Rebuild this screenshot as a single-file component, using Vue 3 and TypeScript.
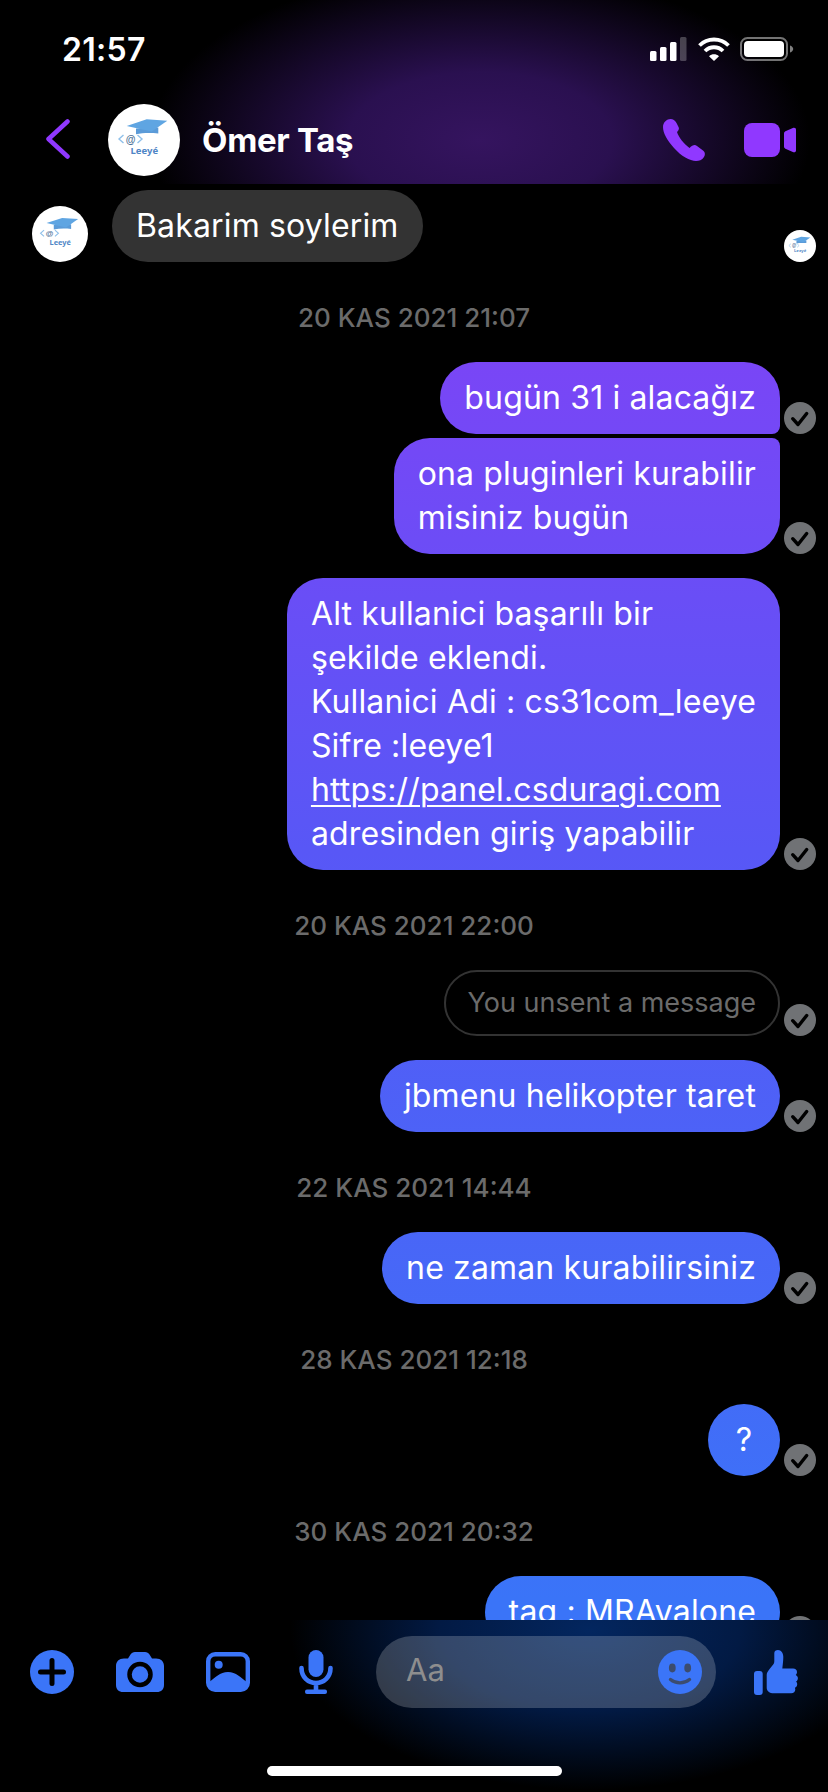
<template>
  <div class="screen">
    <header class="header">
      <div class="status">
        <span class="clock">21:57</span>
        <div class="status-icons">
          <svg width="38" height="24" viewBox="0 0 38 24">
            <rect x="0" y="14" width="6.5" height="10" rx="1.5" fill="#fff" />
            <rect x="10" y="10" width="6.5" height="14" rx="1.5" fill="#fff" />
            <rect x="20" y="5" width="6.5" height="19" rx="1.5" fill="#fff" />
            <rect x="30" y="0" width="6.5" height="24" rx="1.5" fill="#fff" opacity=".25" />
          </svg>
          <svg width="32" height="24" viewBox="0 0 32 24" fill="none" stroke="#fff" stroke-width="3.8">
            <path d="M1.5 8.5C9.5 .5 22.5 .5 30.5 8.5" />
            <path d="M7 14c5 -5 13 -5 18 0" />
            <path d="M11 19.2c3 -2.6 7 -2.6 10 0L16 24z" fill="#fff" stroke="none" />
          </svg>
          <svg width="54" height="24" viewBox="0 0 54 24">
            <rect x="1" y="1" width="46" height="22" rx="6.5" fill="none" stroke="#fff" stroke-opacity=".45" stroke-width="2" />
            <rect x="4" y="4" width="40" height="16" rx="4" fill="#fff" />
            <path d="M50 8.5c2 .6 3.2 2 3.2 3.5s-1.2 2.900 -3.200 3.500z" fill="#fff" opacity=".5" />
          </svg>
        </div>
      </div>
      <nav class="nav">
        <svg class="back" width="24" height="40" viewBox="0 0 24 40" fill="none" stroke="#9038ff" stroke-width="4.500" stroke-linecap="round" stroke-linejoin="round">
          <path d="M21.500 2.500 2.500 20l19 17.500" />
        </svg>
        <svg class="avatar" width="72" height="72" viewBox="0 0 72 72">
          <!-- logo, reused below with <use> -->
          <g id="leeye">
            <circle cx="36" cy="36" r="36" fill="#fff" />
            <path d="M28 24.500v5.800c7 -1.600 15 -1.400 22.300 -.8v-6z" fill="#5b9bd8" />
            <path d="M18.700 22 38.700 15.300 59.300 16.700 43.700 27.500z" fill="#5fa5e2" />
            <path d="M15.500 31 11 35l4.500 4M29.500 31l4.500 4-4.500 4" stroke="#8fc0ea" stroke-width="1.400" fill="none" />
            <text x="22.700" y="38.500" class="logo-at">@</text>
            <text x="36.300" y="50" class="logo-name">Leeyé</text>
          </g>
        </svg>
        <span class="name">Ömer Taş</span>
        <div class="nav-actions">
          <svg width="42" height="42" viewBox="0 0 42 42" fill="#9038ff">
            <path d="M0 8C0 3 4 0 7.500 0 10 0 12 1.500 13.500 4l2 4c.8 1.500 .5 3 -1 4.500l-.5 .5c1.500 5 7 12 12.500 16l1.500 -1.500c2 -1.500 4 -2 6 -.5l6 4.500c2 1.500 2.500 4 1 6.500-2 3 -5 4 -8 4-6 0-15 -5-22 -13C4 21 0 14 0 8z" />
          </svg>
          <svg width="52" height="34" viewBox="0 0 52 34" fill="#9038ff">
            <rect width="36" height="34" rx="8" />
            <path d="M40 10.500c0-1 .5 -1.700 1.400 -2.200l8 -3.500c1.300 -.5 2.600 .3 2.600 1.700v21c0 1.400 -1.300 2.200 -2.600 1.700l-8 -3.500c-.9 -.5 -1.400 -1.200 -1.400 -2.200z" />
          </svg>
        </div>
      </nav>
    </header>

    <main class="chat">
      <div class="row incoming">
        <svg class="peer" width="56" height="56" viewBox="0 0 72 72"><use href="#leeye" /></svg>
        <div class="bubble grey">Bakarim soylerim</div>
        <svg class="seen" width="32" height="32" viewBox="0 0 72 72"><use href="#leeye" /></svg>
      </div>

      <template v-for="(item, i) in items" :key="i">
        <div v-if="item.stamp" class="stamp">{{ item.stamp }}</div>
        <div v-else class="row outgoing" :class="{ tight: item.tight }">
          <div class="bubble" :class="item.cls">
            <template v-for="(line, j) in item.lines" :key="j">
              <a v-if="line.startsWith('https')" class="link">{{ line }}</a>
              <template v-else>{{ line }}</template>
              <br v-if="j < item.lines!.length - 1" />
            </template>
          </div>
          <svg class="check" width="32" height="32" viewBox="0 0 32 32">
            <circle cx="16" cy="16" r="16" fill="#707275" />
            <path d="M8.700 16.700 14 22.500 22.700 11.500" fill="none" stroke="#000" stroke-width="3.400" stroke-linecap="round" stroke-linejoin="round" />
          </svg>
        </div>
      </template>
    </main>

    <footer class="footer">
      <div class="composer">
        <div class="tool">
          <svg width="44" height="44" viewBox="0 0 44 44">
            <circle cx="22" cy="22" r="22" fill="#3b75f8" />
            <path d="M10.500 22h23M22 10.500v23" stroke="#000" stroke-width="5" stroke-linecap="round" />
          </svg>
        </div>
        <div class="tool">
          <svg width="48" height="40" viewBox="0 0 48 40">
            <path d="M8 6.500h4l2.500 -4C15.500 1 17 0 19 0h10c2 0 3.500 1 4.500 2.500l2.500 4h4c5 0 8 3 8 7.500v19c0 4.500 -3 7 -7 7H7c-4 0-7 -2.500-7 -7V14c0-4.500 3-7.500 8 -7.500z" fill="#3b75f8" />
            <circle cx="24" cy="22.500" r="10.500" fill="none" stroke="#000" stroke-width="4.500" />
          </svg>
        </div>
        <div class="tool">
          <svg width="44" height="40" viewBox="0 0 44 40">
            <rect x="2.200" y="2.200" width="39.600" height="35.600" rx="7" fill="none" stroke="#3b75f8" stroke-width="4.400" />
            <circle cx="12.700" cy="12.700" r="4" fill="#3b75f8" />
            <path d="M3 30c6 -4 11 -10 19 -10s13 6 19 10v5c0 2 -1 3 -3 3H6c-2 0-3 -1-3 -3z" fill="#3b75f8" />
          </svg>
        </div>
        <div class="tool">
          <svg width="34" height="44" viewBox="0 0 34 44">
            <rect x="9.500" y="0" width="15" height="27" rx="7.500" fill="#3b75f8" />
            <path d="M2.500 18c0 9 6.500 15 14.500 15s14.500 -6 14.500 -15M17 33v7" fill="none" stroke="#3b75f8" stroke-width="4.600" stroke-linecap="round" />
            <rect x="6" y="39.400" width="22" height="4.600" rx="2" fill="#3b75f8" />
          </svg>
        </div>
        <div class="input">
          <span class="placeholder">Aa</span>
          <svg width="44" height="44" viewBox="0 0 44 44">
            <circle cx="22" cy="22" r="22" fill="#3b75f8" />
            <ellipse cx="14.300" cy="18" rx="3.400" ry="4.400" fill="#3c4c6e" />
            <ellipse cx="29.700" cy="18" rx="3.400" ry="4.400" fill="#3c4c6e" />
            <path d="M12.500 29.500c5.500 4.500 13.500 4.500 19 0" fill="none" stroke="#3c4c6e" stroke-width="3.400" stroke-linecap="round" />
          </svg>
        </div>
        <svg class="like" width="44" height="45" viewBox="0 0 44 45" fill="#3b75f8">
          <rect x="0" y="21" width="8.700" height="24" rx="3" />
          <path d="M12.700 38V25c0-2 1-3.500 2.500 -5.500l4 -5c.8 -1 1.100 -2 1.100 -3.500V3c0-2 1.700 -3 3.700 -3 3.200 0 5.300 3 5.300 7 0 3.500 -.5 7.500 -1 11.500h10.700c2.500 0 4 1.500 4 3.500 0 1.300 -.6 2.300 -1.300 3 1.600 .8 2.200 2 2.200 3.300 0 1.500 -.8 2.600 -1.800 3.300 .8 .9 1.100 1.700 1.100 2.800 0 1.600 -1 2.800 -2.300 3.300 .3 .6 .4 1.200 .4 1.800 0 2.300 -1.700 3.800 -4 3.800H20c-4.500 0-7.300 -2-7.300 -5.500z" />
        </svg>
      </div>
      <div class="home-bar"></div>
    </footer>
  </div>
</template>

<script setup lang="ts">
interface ChatItem {
  stamp?: string
  lines?: string[]
  cls?: string
  tight?: boolean
}

const items: ChatItem[] = [
  { stamp: '20 KAS 2021 21:07' },
  { lines: ['bugün 31 i alacağız'], cls: 'first' },
  { lines: ['ona pluginleri kurabilir', 'misiniz bugün'], cls: 'last', tight: true },
  {
    lines: [
      'Alt kullanici başarılı bir',
      'şekilde eklendi.',
      'Kullanici Adi : cs31com_leeye',
      'Sifre :leeye1',
      'https://panel.csduragi.com',
      'adresinden giriş yapabilir',
    ],
  },
  { stamp: '20 KAS 2021 22:00' },
  { lines: ['You unsent a message'], cls: 'unsent' },
  { lines: ['jbmenu helikopter taret'] },
  { stamp: '22 KAS 2021 14:44' },
  { lines: ['ne zaman kurabilirsiniz'] },
  { stamp: '28 KAS 2021 12:18' },
  { lines: ['?'], cls: 'round' },
  { stamp: '30 KAS 2021 20:32' },
  { lines: ['tag : MRAvalone'] },
]
</script>

<style>
html, body { margin: 0; background: #000; }
</style>

<style scoped>
.screen {
  width: 828px; height: 1792px;
  display: flex; flex-direction: column;
  background: #000; color: #fff;
  font-family: Inter, "Noto Sans", sans-serif;
  overflow: hidden;
}
.logo-at { font: 700 10px "Liberation Sans", sans-serif; fill: #4d6f96; text-anchor: middle; }
.logo-name { font: 700 9.500px "Noto Sans", sans-serif; fill: #4f86c6; text-anchor: middle; }

/* Header */
.header {
  height: 184px; flex: none;
  background: radial-gradient(ellipse 330px 170px at 480px 140px, #35145f 0%, #2a1050 40%, #000 100%);
}
.status {
  height: 100px; box-sizing: border-box;
  display: flex; justify-content: space-between; align-items: flex-start;
  padding: 31px 34px 0 62px;
}
.clock { font-size: 32px; line-height: 38px; font-weight: 600; letter-spacing: .3px; }
.status-icons { display: flex; align-items: center; gap: 10px; padding-top: 6px; }
.nav { height: 84px; display: flex; align-items: flex-start; padding: 4px 0 0 46px; }
.back { margin-top: 15px; flex: none; }
.avatar { margin-left: 38px; flex: none; }
.name { margin: 14px 0 0 22px; font-size: 33px; line-height: 44px; font-weight: 700; letter-spacing: -.3px; }
.nav-actions { margin-left: auto; display: flex; align-items: center; gap: 39px; padding: 15px 32px 0 0; }

/* Messages */
.chat { flex: 1; min-height: 0; overflow: hidden; padding-top: 6px; }
.row { display: flex; align-items: flex-end; margin-top: 24px; }
.stamp + .row { margin-top: 0; }
.row.tight { margin-top: 4px; }
.outgoing { justify-content: flex-end; padding-right: 12px; gap: 4px; }
.incoming { margin-top: 0; padding: 0 12px 0 32px; }
.peer { flex: none; margin-right: 24px; }
.seen { flex: none; margin-left: auto; }
.bubble {
  padding: 14px 24px;
  font-size: 32px; line-height: 44px; letter-spacing: .15px;
  border-radius: 36px;
  white-space: nowrap;
  background: linear-gradient(180deg, #8440f6 200px, #5857f6 850px, #3a74f8 1600px) fixed;
}
.bubble.grey { background: #333; }
.bubble.first { border-bottom-right-radius: 8px; }
.bubble.last { border-top-right-radius: 8px; }
.bubble.round { width: 72px; height: 72px; padding: 14px 0; box-sizing: border-box; text-align: center; }
.bubble.unsent {
  background: none; border: 2px solid #333;
  padding: 9px 22px; font-size: 27px; letter-spacing: 0; color: #6b6b6b;
}
.link { text-decoration: underline; text-underline-offset: 4px; text-decoration-thickness: 2px; }
.check { flex: none; }
.stamp {
  height: 100px; box-sizing: border-box; padding-top: 41px;
  text-align: center; font-size: 26px; line-height: 30px; font-weight: 500;
  color: #6b6b6b;
}

/* Footer */
.footer {
  height: 172px; flex: none; box-sizing: border-box;
  padding-top: 16px;
  background: radial-gradient(ellipse 300px 160px at 590px 10px, #03265f 0%, #021a44 50%, #000 100%);
}
.composer { display: flex; align-items: center; height: 72px; padding-left: 8px; }
.tool { width: 88px; display: flex; justify-content: center; flex: none; }
.input {
  width: 340px; height: 72px; margin-left: 16px; flex: none;
  box-sizing: border-box; padding: 0 14px 0 30px;
  display: flex; align-items: center; justify-content: space-between;
  background: rgba(255, 255, 255, .2);
  border-radius: 36px;
}
.placeholder { font-size: 31px; line-height: 40px; margin-top: -4px; color: #8e8e8e; }
.like { margin-left: 38px; flex: none; }
.home-bar { width: 295px; height: 10px; margin: 58px auto 0; border-radius: 5px; background: #fff; }
</style>
